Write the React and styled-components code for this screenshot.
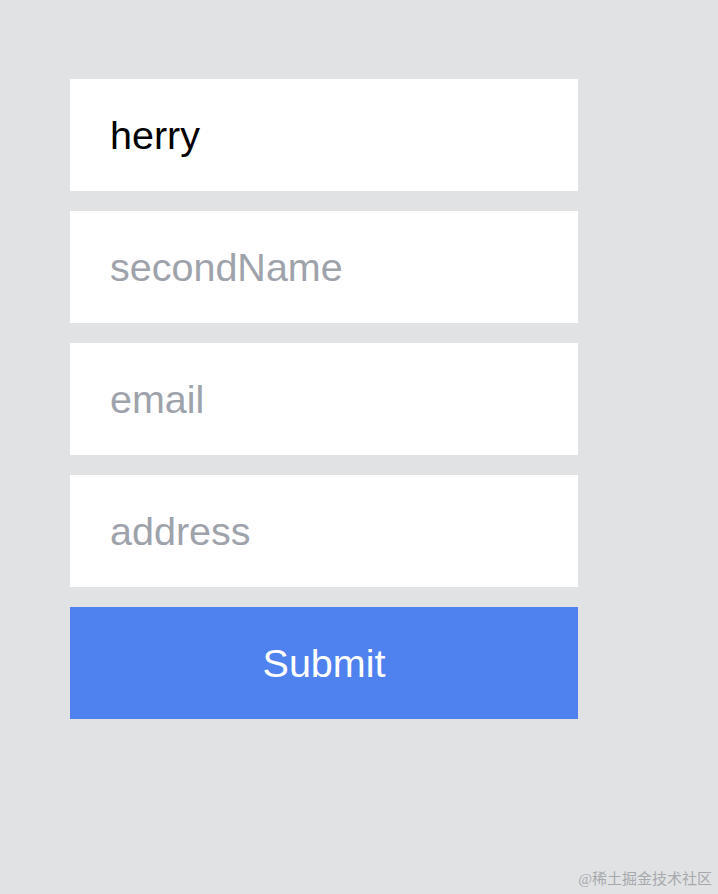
import React from "react";
import styled, { createGlobalStyle } from "styled-components";

const Global = createGlobalStyle`
  html, body { margin: 0; padding: 0; background: #e1e2e4; }
  #root { min-height: 894px; }
`;

const Page = styled.div`
  position: relative;
  min-height: 894px;
  background: #e1e2e4;
  padding: 79px 0 0 70px;
  box-sizing: border-box;
  font-family: "Liberation Sans", Arial, sans-serif;
`;

const Form = styled.form`
  width: 508px;
  display: flex;
  flex-direction: column;
  gap: 20px;
`;

const Field = styled.input`
  height: 112px;
  box-sizing: border-box;
  border: none;
  outline: none;
  background: #ffffff;
  padding: 0 40px;
  margin: 0;
  font-family: "Liberation Sans", Arial, sans-serif;
  font-size: 39.5px;
  color: #000;
  &::placeholder { color: #9ea3ab; }
`;

const Button = styled.button`
  height: 112px;
  border: none;
  margin: 0;
  background: #4f81ef;
  color: #ffffff;
  font-family: "Liberation Sans", Arial, sans-serif;
  font-size: 39.5px;
  cursor: pointer;
`;

const Watermark = styled.div`
  position: absolute;
  right: 6px;
  bottom: 6px;
  font-family: "Liberation Serif", "Noto Sans CJK SC", serif;
  font-size: 15px;
  color: #a7a9ad;
`;

export default function App() {
  return (
    <Page>
      <Global />
      <Form onSubmit={(e) => e.preventDefault()}>
        <Field defaultValue="herry" />
        <Field placeholder="secondName" />
        <Field placeholder="email" />
        <Field placeholder="address" />
        <Button type="submit">Submit</Button>
      </Form>
      <Watermark>@稀土掘金技术社区</Watermark>
    </Page>
  );
}
